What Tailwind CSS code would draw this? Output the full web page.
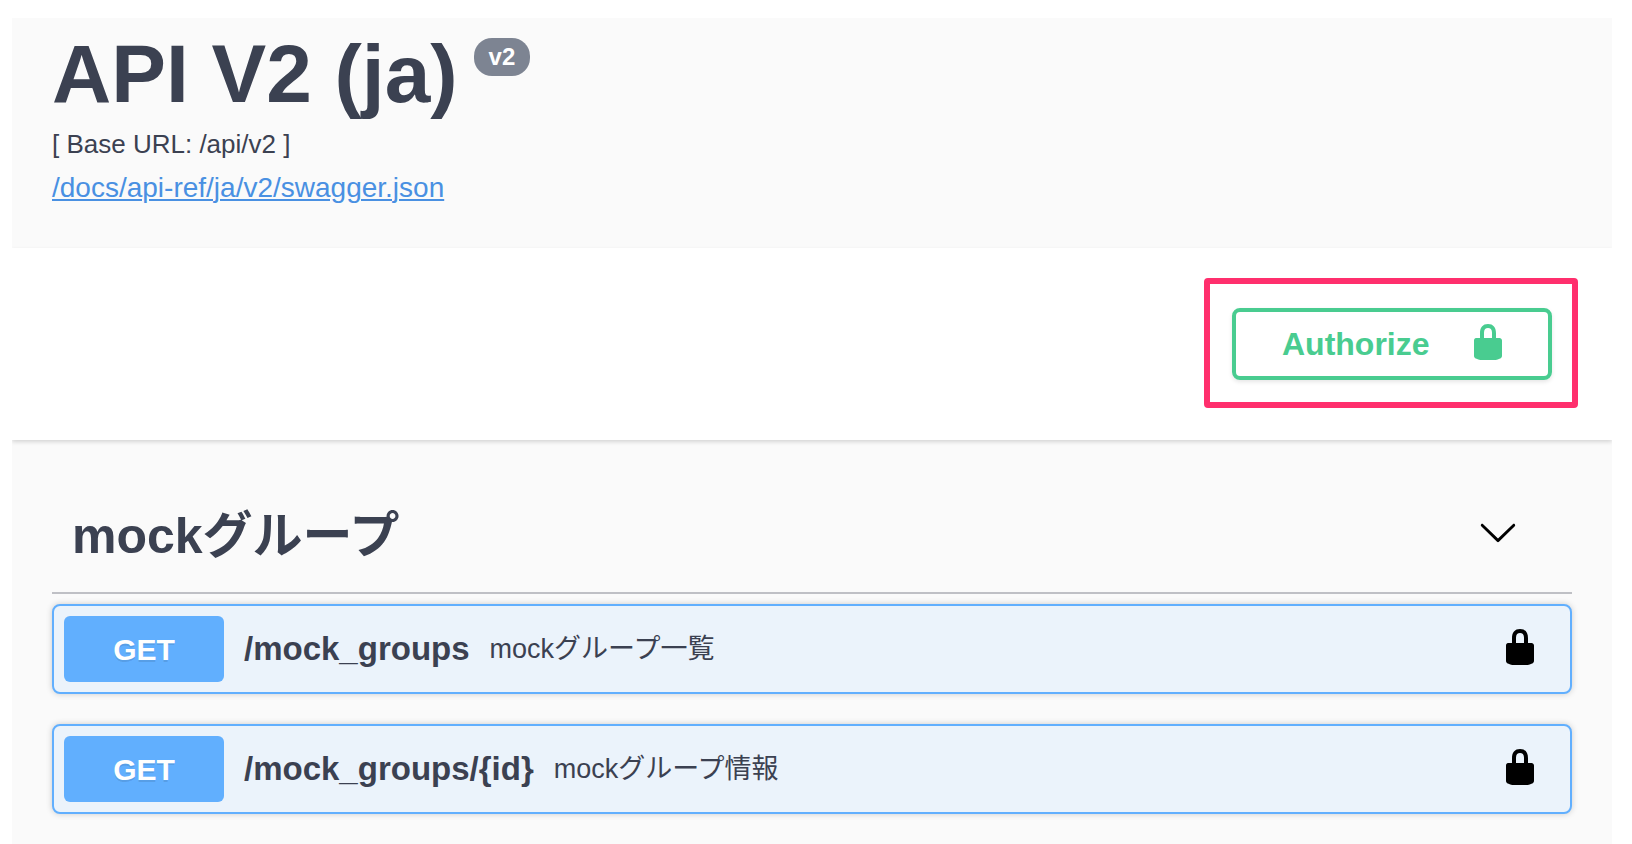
<!DOCTYPE html>
<html lang="ja">
<head>
  <meta charset="utf-8">
  <title>API V2 (ja)</title>
  <script src="https://cdn.jsdelivr.net/npm/@tailwindcss/browser@4"></script>
</head>
<body class="bg-white pt-[18px] pl-3 pr-5 font-['Liberation_Sans','Noto_Sans_CJK_JP',sans-serif] text-[#3b4151]">
  <svg class="hidden">
    <symbol id="locked" viewBox="0 0 20 20">
      <path d="M15.8 8H14V5.6C14 2.703 12.665 1 10 1 7.334 1 6 2.703 6 5.6V8H4c-.553 0-1 .646-1 1.199V17c0 .549.428 1.139.951 1.307l1.197.387C5.672 18.861 6.55 19 7.1 19h5.8c.549 0 1.428-.139 1.951-.307l1.196-.387c.524-.167.953-.757.953-1.306V9.199C17 8.646 16.352 8 15.8 8zM12 8H8V5.199C8 3.754 8.797 3 10 3c1.203 0 2 .754 2 2.199V8z"/>
    </symbol>
    <symbol id="arrow-down" viewBox="0 0 20 20">
      <path d="M17.418 6.109c.272-.268.709-.268.979 0s.271.701 0 .969l-7.908 7.83c-.27.268-.707.268-.979 0l-7.908-7.83c-.27-.268-.27-.701 0-.969.271-.268.709-.268.979 0L10 13.25l7.418-7.141z"/>
    </symbol>
  </svg>

  <!-- info -->
  <header class="bg-[#fafafa] px-10 pt-4 pb-[39px]">
    <div class="flex items-start gap-4 pb-2">
      <h1 class="text-[82px] leading-[80px] font-bold">API V2 (ja)</h1>
      <span class="mt-1 rounded-[18px] bg-[#7d8492] px-[15px] text-[24px] leading-[38px] font-bold text-white">v2</span>
    </div>
    <p class="text-[26px] leading-[44px]">[ Base URL: /api/v2 ]</p>
    <a href="#" class="block text-[28px] leading-[43px] text-[#4990e2] underline decoration-2 underline-offset-2">/docs/api-ref/ja/v2/swagger.json</a>
  </header>

  <!-- auth -->
  <section class="relative flex justify-end bg-white px-[60px] py-15 shadow-[0_2px_4px_rgba(0,0,0,0.15)] [clip-path:inset(-4px_0_-8px_0)]">
    <div class="relative">
      <button class="flex h-[72px] w-80 items-center justify-between rounded-lg border-4 border-[#49cc90] pr-10 pl-[46px] text-[32px] font-bold text-[#49cc90] shadow-[0_2px_4px_rgba(0,0,0,0.1)]">
        Authorize
        <svg class="mb-1 size-10 fill-current"><use href="#locked"/></svg>
      </button>
      <div class="pointer-events-none absolute -top-[30px] -right-[26px] -bottom-7 -left-7 rounded border-6 border-[#ff2f6d]"></div>
    </div>
  </section>

  <!-- operations -->
  <main class="min-h-[404px] bg-[#fafafa] px-10 pt-10">
    <div class="flex h-[114px] items-center justify-between border-b-2 border-[#bfc0c5] pr-[54px] pl-5">
      <h2 class="text-[50px] leading-[64px] font-bold">mockグループ</h2>
      <button class="pb-2" aria-label="mockグループ"><svg class="size-10 fill-black"><use href="#arrow-down"/></svg></button>
    </div>

    <div class="flex flex-col gap-[30px] pt-[10px]">
      <div class="flex h-[90px] items-center rounded-lg border-2 border-[#61affe] bg-[#ebf3fb] pr-[30px] pl-[10px] shadow-[0_0_6px_rgba(0,0,0,0.19)]">
        <button class="h-[66px] w-40 rounded-md bg-[#61affe] text-[30px] font-bold text-white text-shadow-[0_2px_0_rgba(0,0,0,0.1)]">GET</button>
        <span class="pl-5 text-[33px] font-bold">/mock_groups</span>
        <span class="grow pl-5 text-[27px]">mockグループ一覧</span>
        <button class="pb-1" aria-label="authorize"><svg class="size-10 fill-black"><use href="#locked"/></svg></button>
      </div>
      <div class="flex h-[90px] items-center rounded-lg border-2 border-[#61affe] bg-[#ebf3fb] pr-[30px] pl-[10px] shadow-[0_0_6px_rgba(0,0,0,0.19)]">
        <button class="h-[66px] w-40 rounded-md bg-[#61affe] text-[30px] font-bold text-white text-shadow-[0_2px_0_rgba(0,0,0,0.1)]">GET</button>
        <span class="pl-5 text-[33px] font-bold">/mock_groups/{id}</span>
        <span class="grow pl-5 text-[27px]">mockグループ情報</span>
        <button class="pb-1" aria-label="authorize"><svg class="size-10 fill-black"><use href="#locked"/></svg></button>
      </div>
    </div>
  </main>
</body>
</html>
